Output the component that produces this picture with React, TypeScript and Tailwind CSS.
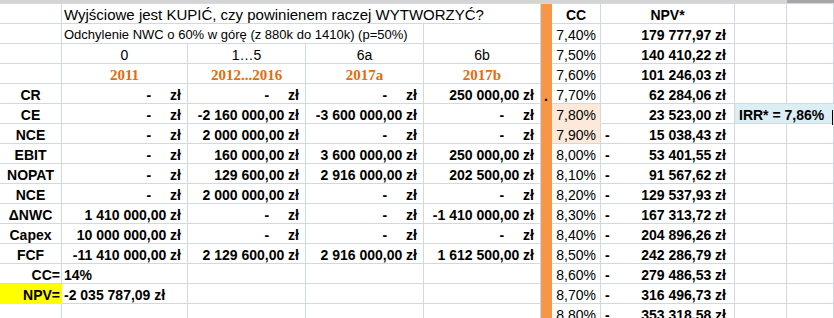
import React from 'react';

type Val = string | null;

const line = 'border-b border-r border-[#d0d7e5]';
const base = 'flex items-end whitespace-nowrap leading-[16px]';

const data: { label: string; vals: Val[] }[] = [
  { label: 'CR', vals: [null, null, null, '250 000,00 zł'] },
  { label: 'CE', vals: [null, '-2 160 000,00 zł', '-3 600 000,00 zł', null] },
  { label: 'NCE', vals: [null, '2 000 000,00 zł', null, null] },
  { label: 'EBIT', vals: [null, '160 000,00 zł', '3 600 000,00 zł', '250 000,00 zł'] },
  { label: 'NOPAT', vals: [null, '129 600,00 zł', '2 916 000,00 zł', '202 500,00 zł'] },
  { label: 'NCE', vals: [null, '2 000 000,00 zł', null, null] },
  { label: 'ΔNWC', vals: ['1 410 000,00 zł', null, null, '-1 410 000,00 zł'] },
  { label: 'Capex', vals: ['10 000 000,00 zł', null, null, null] },
  { label: 'FCF', vals: ['-11 410 000,00 zł', '2 129 600,00 zł', '2 916 000,00 zł', '1 612 500,00 zł'] },
];

// CC sensitivity: rate, NPV, negative?
const sens: [string, string, boolean][] = [
  ['7,40%', '179 777,97 zł', false],
  ['7,50%', '140 410,22 zł', false],
  ['7,60%', '101 246,03 zł', false],
  ['7,70%', '62 284,06 zł', false],
  ['7,80%', '23 523,00 zł', false],
  ['7,90%', '15 038,43 zł', true],
  ['8,00%', '53 401,55 zł', true],
  ['8,10%', '91 567,62 zł', true],
  ['8,20%', '129 537,93 zł', true],
  ['8,30%', '167 313,72 zł', true],
  ['8,40%', '204 896,26 zł', true],
  ['8,50%', '242 286,79 zł', true],
  ['8,60%', '279 486,53 zł', true],
  ['8,70%', '316 496,73 zł', true],
  ['8,80%', '353 318,58 zł', true],
];

const Blank = ({ className = '' }: { className?: string }) => <div className={`${line} ${className}`} />;

const Money = ({ v }: { v: Val }) => (
  <div className={`${base} ${line} justify-end pr-[6px] font-bold`}>
    {v ?? (
      <>
        <span>-</span>
        <span className="ml-[19px]">zł</span>
      </>
    )}
  </div>
);

const Label = ({ children }: { children: React.ReactNode }) => (
  <div className={`${base} ${line} justify-center font-bold`}>{children}</div>
);

function LeftCells({ row }: { row: number }) {
  if (row === 0)
    return (
      <>
        <Blank />
        <div className={`${base} col-span-4 ${line} pl-[2px] text-[15px]`}>
          Wyjściowe jest KUPIĆ, czy powinienem raczej WYTWORZYĆ?
        </div>
      </>
    );
  if (row === 1)
    return (
      <>
        <Blank />
        <div className={`${base} col-span-3 ${line} pl-[2px] text-[13px]`}>
          Odchylenie NWC o 60% w górę (z 880k do 1410k) (p=50%)
        </div>
        <Blank />
      </>
    );
  if (row === 2)
    return (
      <>
        <Blank />
        {['0', '1…5', '6a', '6b'].map((t) => (
          <div key={t} className={`${base} ${line} justify-center`}>
            {t}
          </div>
        ))}
      </>
    );
  if (row === 3)
    return (
      <>
        <Blank />
        {['2011', '2012...2016', '2017a', '2017b'].map((t) => (
          <div
            key={t}
            className={`${base} ${line} justify-center font-['Liberation_Serif',serif] text-[15px] font-bold text-[#e46c0a]`}
          >
            {t}
          </div>
        ))}
      </>
    );
  if (row >= 4 && row <= 12) {
    const d = data[row - 4];
    return (
      <>
        <Label>{d.label}</Label>
        {d.vals.map((v, i) => (
          <Money key={i} v={v} />
        ))}
      </>
    );
  }
  if (row === 13)
    return (
      <>
        <div className={`${base} ${line} justify-end pr-[1px] font-bold`}>CC=</div>
        <div className={`${base} ${line} pl-[2px] font-bold`}>14%</div>
        <Blank />
        <Blank />
        <Blank />
      </>
    );
  if (row === 14)
    return (
      <>
        <div className={`${base} border-b border-r border-[#ffff00] bg-[#ffff00] justify-end pr-[1px] font-bold`}>
          NPV=
        </div>
        <div className={`${base} ${line} pl-[2px] font-bold`}>-2 035 787,09 zł</div>
        <Blank />
        <Blank />
        <Blank />
      </>
    );
  return (
    <>
      <Blank />
      <Blank />
      <Blank />
      <Blank />
      <Blank />
    </>
  );
}

function RightCells({ row }: { row: number }) {
  if (row === 0)
    return (
      <>
        <div className="bg-[#f79646]" />
        <div className={`${base} ${line} justify-center font-bold`}>CC</div>
        <div className={`${base} ${line} justify-center font-bold`}>NPV*</div>
        <Blank />
        <Blank />
      </>
    );
  const [cc, npv, neg] = sens[row - 1];
  const peach = row === 5 || row === 6;
  return (
    <>
      <div className={`${base} bg-[#f79646] pl-[3px] font-bold`}>{row === 4 ? '.' : ''}</div>
      <div
        className={`${base} ${line} justify-end pr-[4px] ${peach ? 'bg-[#fde9d9]' : ''} ${
          row === 5 ? 'border-b-[#fde9d9]' : ''
        }`}
      >
        {cc}
      </div>
      <div className={`${base} ${line} justify-between pl-[4px] pr-[8px] font-bold`}>
        <span>{neg ? '-' : ''}</span>
        <span>{npv}</span>
      </div>
      {row === 5 ? (
        <div className={`${base} relative col-span-2 border-b border-[#d0d7e5] bg-[#dbeef3] pl-[4px] font-bold`}>
          IRR* = 7,86%
          <span className="absolute right-[1px] top-[6px] h-[15px] w-[1px] bg-black" />
        </div>
      ) : (
        <>
          <Blank />
          <Blank />
        </>
      )}
    </>
  );
}

export default function App() {
  const rows = Array.from({ length: 16 }, (_, i) => i);
  return (
    <div className="h-[318px] w-[834px] overflow-hidden bg-white font-['Liberation_Sans',Arial,sans-serif] text-[14px] text-black">
      <div className="flex h-[4px] border-b border-[#d0d7e5]">
        <div className="flex-1 bg-[#d4d4d4]" />
        <div className="w-[47px] bg-[#a6a6a6]" />
      </div>
      <div className="grid auto-rows-[20px] grid-cols-[62px_126px_118px_118px_117px_11px_49px_134px_52px_47px]">
        {rows.map((r) => (
          <React.Fragment key={r}>
            <LeftCells row={r} />
            <RightCells row={r} />
          </React.Fragment>
        ))}
      </div>
    </div>
  );
}
